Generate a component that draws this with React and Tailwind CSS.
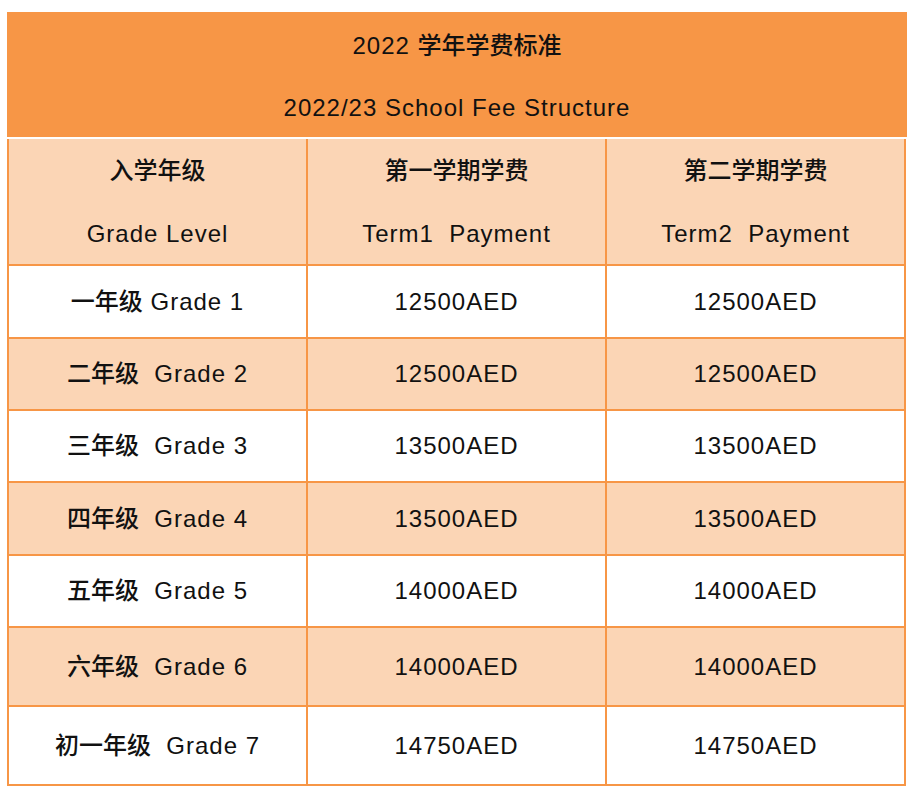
import React from "react";

const fees = [
  { grade: "一年级", en: " Grade 1", fee: "12500AED", h: "h-[71px]", bg: "bg-white" },
  { grade: "二年级", en: "  Grade 2", fee: "12500AED", h: "h-[70px]", bg: "bg-[#fbd5b5]" },
  { grade: "三年级", en: "  Grade 3", fee: "13500AED", h: "h-[70px]", bg: "bg-white" },
  { grade: "四年级", en: "  Grade 4", fee: "13500AED", h: "h-[71px]", bg: "bg-[#fbd5b5]" },
  { grade: "五年级", en: "  Grade 5", fee: "14000AED", h: "h-[70px]", bg: "bg-white" },
  { grade: "六年级", en: "  Grade 6", fee: "14000AED", h: "h-[77px]", bg: "bg-[#fbd5b5]" },
  { grade: "初一年级", en: "  Grade 7", fee: "14750AED", h: "h-[77px]", bg: "bg-white" },
];

const headers = [
  { zh: "入学年级", en: "Grade Level" },
  { zh: "第一学期学费", en: "Term1  Payment" },
  { zh: "第二学期学费", en: "Term2  Payment" },
];

const App = () => {
  return (
    <div
      className="min-h-screen bg-white pt-[12px] pl-[7px] text-[24px] tracking-[1px] text-[#111]"
      style={{ fontFamily: '"Liberation Sans", "Noto Sans CJK SC", sans-serif' }}
    >
      <div className="w-[900px]">
        {/* Title */}
        <div className="h-[125px] bg-[#f79646] flex flex-col items-center justify-center gap-[34px] pt-[4px]">
          <p className="leading-[28px]">
            2022 <span className="font-medium tracking-normal">学年学费标准</span>
          </p>
          <p className="leading-[28px]">2022/23 School Fee Structure</p>
        </div>
        <div className="h-[2px] bg-white" />

        {/* Table */}
        <div className="w-[899px] bg-[#f79646] px-[2px] pb-[2px] grid grid-cols-3 gap-[2px]">
          {headers.map((h) => (
            <div
              key={h.zh}
              className="h-[125px] bg-[#fbd5b5] flex flex-col items-center justify-center gap-[35px] pt-[1px]"
            >
              <p className="leading-[28px] font-medium tracking-normal">{h.zh}</p>
              <p className="leading-[28px] whitespace-pre">{h.en}</p>
            </div>
          ))}

          {fees.map((row) => (
            <React.Fragment key={row.grade}>
              <div className={`${row.h} ${row.bg} flex items-center justify-center`}>
                <p className="whitespace-pre">
                  <span className="font-medium tracking-normal">{row.grade}</span>
                  {row.en}
                </p>
              </div>
              <div className={`${row.h} ${row.bg} flex items-center justify-center`}>
                <p>{row.fee}</p>
              </div>
              <div className={`${row.h} ${row.bg} flex items-center justify-center`}>
                <p>{row.fee}</p>
              </div>
            </React.Fragment>
          ))}
        </div>
      </div>
    </div>
  );
};

export default App;
